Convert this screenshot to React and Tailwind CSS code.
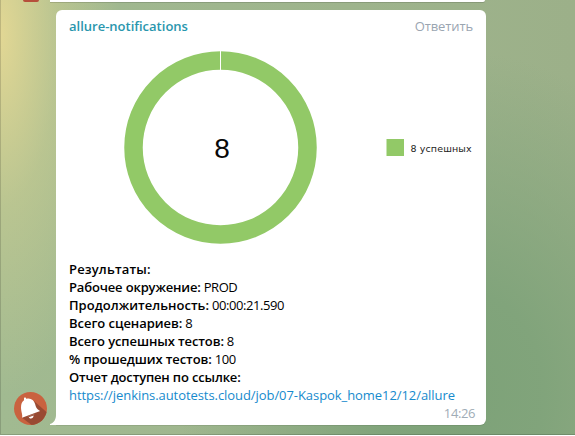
import React from "react";

const results = [
  { label: "Результаты:", value: "", tracking: "tracking-[0.16px]" },
  { label: "Рабочее окружение:", value: "PROD", tracking: "tracking-[-0.16px]" },
  { label: "Продолжительность:", value: "00:00:21.590", tracking: "tracking-[0.03px]" },
  { label: "Всего сценариев:", value: "8", tracking: "tracking-[-0.04px]" },
  { label: "Всего успешных тестов:", value: "8", tracking: "tracking-[-0.1px]" },
  { label: "% прошедших тестов:", value: "100", tracking: "tracking-[-0.1px]" },
  { label: "Отчет доступен по ссылке:", value: "", tracking: "tracking-[-0.16px]" },
];

function Avatar() {
  return (
    <svg className="block size-[33px]" viewBox="0 0 33 33">
      <defs>
        <clipPath id="disc"><circle cx="16.5" cy="16.5" r="16.5" /></clipPath>
      </defs>
      <g clipPath="url(#disc)">
        <rect width="33" height="33" fill="#c9623f" />
        <path d="M20 9 L36 23 L27 40 L8 25.8Z" fill="#994a32" />
      </g>
      <path d="M10 6 C11 5 12.3 5.6 12.4 6.9 C16.5 5.8 20 8 21.1 12 C22.2 16.2 23.4 17.6 26.2 18.9 L8 25.8 C9 23 7 20 7 15.5 C7 11.8 8 9.4 10 8.2Z" fill="white" />
      <path d="M14.8 25.2 C16 27.6 19.6 26.6 19.6 23.6Z" fill="white" />
      <path d="M13.8 24.6 L20.5 22" stroke="#c5a195" strokeWidth="0.4" />
    </svg>
  );
}

function DonutChart() {
  return (
    <svg className="block h-[210px] w-[430px]" viewBox="0 0 430 210">
      <circle cx="164.5" cy="107.5" r="87" fill="none" stroke="#92c967" strokeWidth="18.5" />
      <path d="M164.5 10.5V30" stroke="white" strokeWidth="1" />
      <text x="166" y="117.5" textAnchor="middle" fontSize="28" fontFamily="Liberation Sans, sans-serif" fill="#080808">8</text>
      <rect x="330.5" y="99" width="17.5" height="17" fill="#92c967" />
      <text x="354.5" y="112" textLength="61" fontSize="9.5" fontFamily="DejaVu Sans, sans-serif" fill="#222">8 успешных</text>
    </svg>
  );
}

export default function App() {
  return (
    <div className="h-[436px] w-[575px] overflow-hidden bg-white font-['Open_Sans',sans-serif] text-[13px]">
      <div className="flex h-[435px] flex-col border-b border-l border-black/15 bg-[radial-gradient(ellipse_120px_360px_at_0%_8%,#e2d794_0%,#d2d09180_48%,#c0c89000_100%),radial-gradient(ellipse_280px_340px_at_80%_90%,#7da278_0%,#7fa37aee_30%,#7da27800_100%),linear-gradient(90deg,#a1ba91,#9cb089)] bg-origin-border">
        <div className="flex h-[10px] shrink-0 items-start pl-[22px]">
          <div className="h-[2px] w-4 rounded-b-full bg-[#b64f3b]" />
          <div className="ml-[11px] h-[2px] w-[435px] rounded-br-md bg-white shadow-[0_1px_0_#00000022]" />
        </div>
        <div className="flex h-[415px] shrink-0 items-end">
          <div className="w-[49px] pl-[13px]"><Avatar /></div>
          <svg className="block h-[10px] w-[6px]" viewBox="0 0 6 10">
            <path d="M6 0V10H0V9C4 8 6 4 6 0Z" fill="white" />
          </svg>
          <div className="flex h-[415px] w-[430px] flex-col rounded-t-[6px] rounded-br-[6px] bg-white shadow-[0_1px_0_#00000014]">
            <div className="flex h-[30px] items-center justify-between px-[13px] pt-[2px] leading-[18px]">
              <span className="font-semibold text-[#2996ad]">allure-notifications</span>
              <span className="tracking-[-0.12px] text-[#9aa5b1]">Ответить</span>
            </div>
            <DonutChart />
            <div className="flex flex-col pl-[13px] pt-[10px]">
              {results.map(({ label, value, tracking }) => (
                <p key={label} className="flex h-[18px] gap-[3px] leading-[18px] text-black">
                  <span className={`font-semibold ${tracking}`}>{label}</span>
                  <span className="tracking-[-0.43px]">{value}</span>
                </p>
              ))}
              <a className="h-[18px] leading-[18px] tracking-[-0.065px] text-[#168acd]">https://jenkins.autotests.cloud/job/07-Kaspok_home12/12/allure</a>
            </div>
            <span className="pr-[11px] text-right leading-[18px] tracking-[-0.4px] text-[#a0acb6]">14:26</span>
          </div>
        </div>
      </div>
    </div>
  );
}
